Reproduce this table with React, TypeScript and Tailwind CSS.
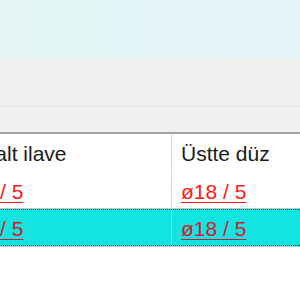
const rows = [
  { a: 'ø18 / 5', b: 'ø18 / 5', selected: false },
  { a: 'ø18 / 5', b: 'ø18 / 5', selected: true },
];

export default function App() {
  return (
    <div
      className="w-[300px] h-[300px] overflow-hidden bg-white"
      style={{ fontFamily: '"Liberation Sans", Arial, sans-serif' }}
    >
      {/* banner */}
      <div className="h-[58px] bg-gradient-to-r from-[#e3f6f5] to-[#e4f5f9]" />

      {/* toolbar area */}
      <div className="h-[49px] bg-[#f0f0f0] border-b border-[#e2e2e2]" />
      <div className="h-[27px] bg-[#f0f0f0] border-t border-[#fafafa] border-b-2 border-b-[#a2a2a2]" />

      {/* grid, scrolled sideways */}
      <div className="overflow-hidden">
        <div className="flex flex-col -ml-[52px] w-[420px] text-[21px] leading-none">
          <div className="flex h-[37px] border-b border-transparent text-[#1b1b1b]">
            <div className="w-[224px] shrink-0 pl-[10px] pt-[9px] border-r border-[#d6d6d6] whitespace-nowrap">
              Üst alt ilave
            </div>
            <div className="flex-1 pl-[9px] pt-[9px] whitespace-nowrap">Üstte düz</div>
          </div>
          {rows.map((r, i) =>
            r.selected ? (
              <div key={i} className="border-t border-[#c4c4c4]">
                <div className="flex h-[37px] bg-[#12e4e1] border-y border-dotted border-[#333] text-[#d11a2e]">
                  <div className="w-[224px] shrink-0 pl-[10px] pt-[8px] border-r border-[#c8c8c8] whitespace-nowrap">
                    <span className="underline decoration-1 underline-offset-[3px]">{r.a}</span>
                  </div>
                  <div className="flex-1 pl-[9px] pt-[8px] whitespace-nowrap">
                    <span className="underline decoration-1 underline-offset-[3px]">{r.b}</span>
                  </div>
                </div>
                <div className="h-px bg-[#c4c4c4]" />
              </div>
            ) : (
              <div key={i} className="flex h-[37px] text-[#ff1616]">
                <div className="w-[224px] shrink-0 pl-[10px] pt-[10px] border-r border-[#d6d6d6] whitespace-nowrap">
                  <span className="underline decoration-1 underline-offset-[3px]">{r.a}</span>
                </div>
                <div className="flex-1 pl-[9px] pt-[10px] whitespace-nowrap">
                  <span className="underline decoration-1 underline-offset-[3px]">{r.b}</span>
                </div>
              </div>
            )
          )}
        </div>
      </div>
    </div>
  );
}
